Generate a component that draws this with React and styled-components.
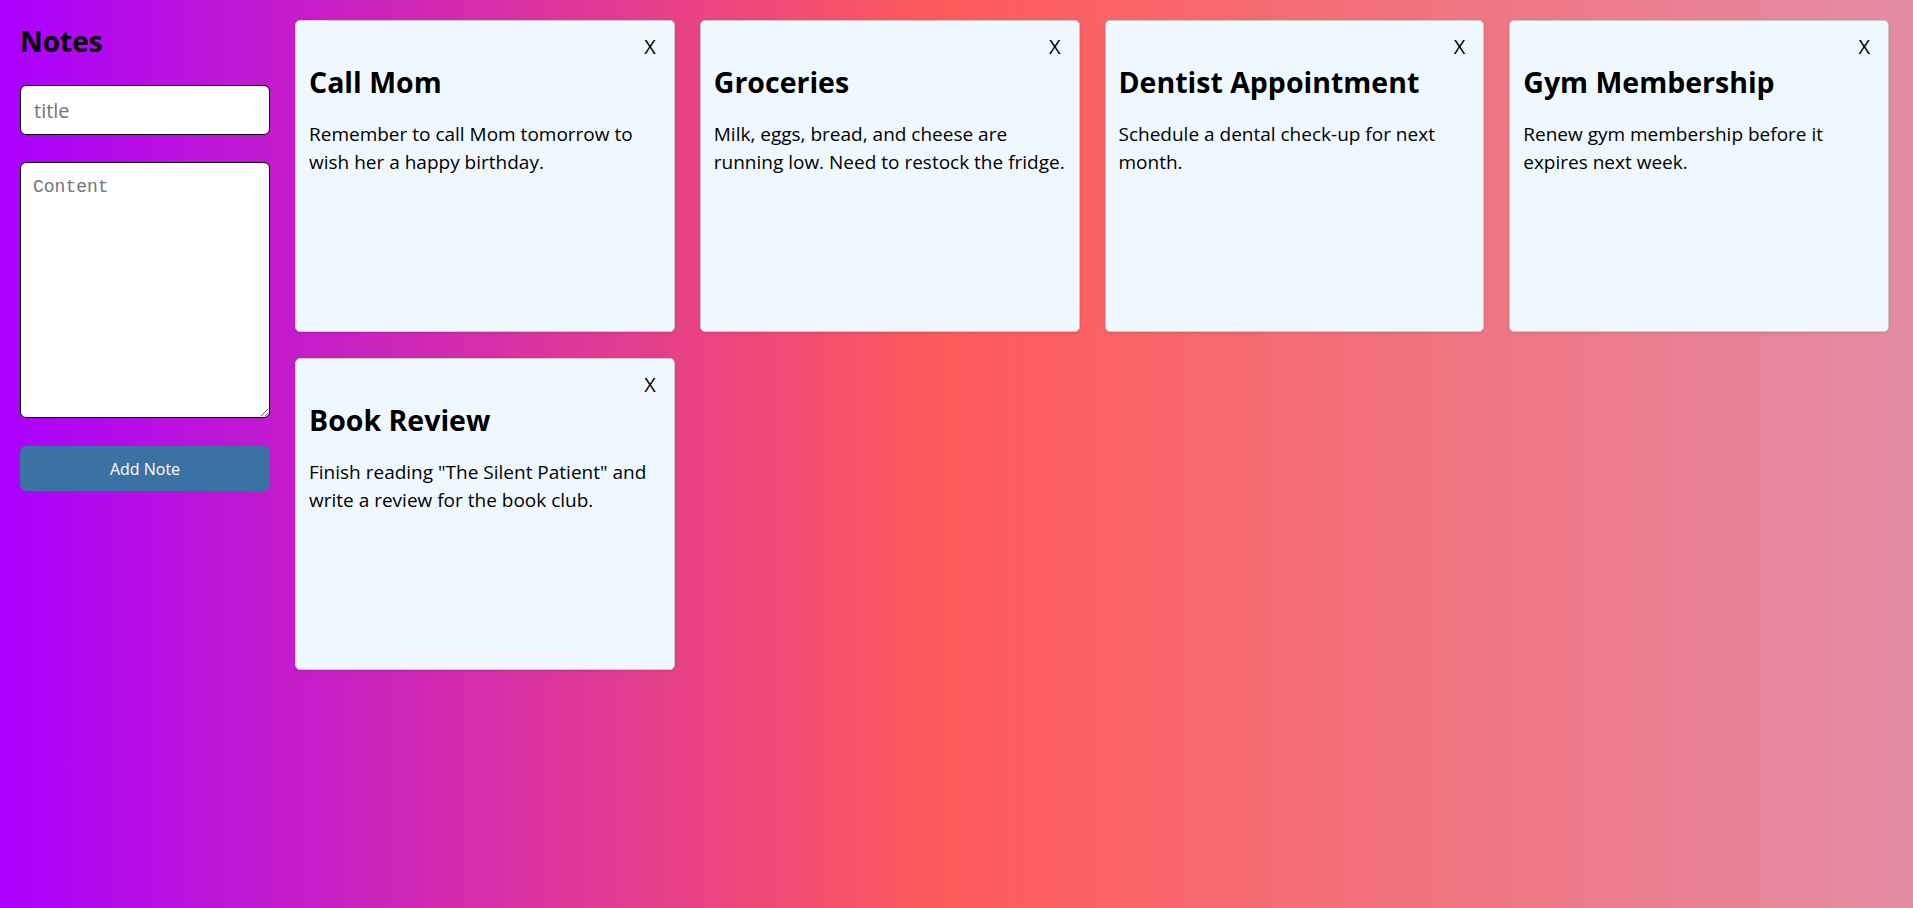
import React from 'react'
import styled, { createGlobalStyle } from 'styled-components'

const GlobalStyle = createGlobalStyle`
  html, body {
    margin: 0;
    padding: 0;
  }
  body {
    min-height: 908px;
    font-family: "Open Sans", "Noto Sans", sans-serif;
    background: linear-gradient(to right, #aa00ff 0%, #ff5a5a 49%, #e48ca4 100%);
    background-attachment: fixed;
  }
`

const notes = [
  { id: 1, title: 'Call Mom', content: 'Remember to call Mom tomorrow to wish her a happy birthday.' },
  { id: 2, title: 'Groceries', content: 'Milk, eggs, bread, and cheese are running low. Need to restock the fridge.' },
  { id: 3, title: 'Dentist Appointment', content: 'Schedule a dental check-up for next month.' },
  { id: 4, title: 'Gym Membership', content: 'Renew gym membership before it expires next week.' },
  { id: 5, title: 'Book Review', content: 'Finish reading "The Silent Patient" and write a review for the book club.' },
]

const Layout = styled.div`
  display: flex;
  align-items: flex-start;
  gap: 25px;
  padding: 20px 24px 20px 20px;
  min-height: 868px;
`

const Sidebar = styled.form`
  width: 250px;
  flex-shrink: 0;
  display: flex;
  flex-direction: column;
`

const Heading = styled.h2`
  margin: 5px 0 28px;
  font-size: 28px;
  font-weight: 700;
  line-height: 32px;
  color: #000;
`

const TitleInput = styled.input`
  box-sizing: border-box;
  width: 100%;
  height: 50px;
  padding: 0 13px;
  border: 1px solid #000;
  border-radius: 6px;
  background: #fff;
  font-family: "Open Sans", sans-serif;
  font-size: 20px;
  &::placeholder { color: #757575; }
`

const ContentArea = styled.textarea`
  box-sizing: border-box;
  width: 100%;
  height: 256px;
  margin-top: 27px;
  padding: 14px 12px;
  border: 1px solid #000;
  border-radius: 6px;
  background: #fff;
  font-family: "Liberation Mono", "DejaVu Sans Mono", monospace;
  font-size: 18px;
  resize: both;
  &::placeholder { color: #757575; }
`

const AddButton = styled.button`
  margin-top: 28px;
  height: 45px;
  width: 100%;
  border: none;
  border-radius: 6px;
  background: #3b72a4;
  color: #fff;
  font-family: "Open Sans", sans-serif;
  font-size: 16px;
  cursor: pointer;
`

const Grid = styled.div`
  flex: 1;
  display: grid;
  grid-template-columns: repeat(4, 1fr);
  column-gap: 25px;
  row-gap: 26px;
`

const Card = styled.div`
  box-sizing: border-box;
  height: 312px;
  padding: 12px 10px 14px 13px;
  background: #f0f8ff;
  border: 1px solid #c9c9c9;
  border-radius: 5px;
  box-shadow: 0 1px 3px rgba(0, 0, 0, 0.12);
  display: flex;
  flex-direction: column;
`

const CardHeader = styled.div`
  display: flex;
  justify-content: flex-end;
  padding-right: 8px;
`

const CloseButton = styled.button`
  border: none;
  background: none;
  padding: 0;
  font-family: "Open Sans", sans-serif;
  font-size: 20px;
  line-height: 28px;
  color: #000;
  cursor: pointer;
`

const CardTitle = styled.h2`
  margin: 2px 0 0;
  font-size: 28.5px;
  line-height: 38px;
  font-weight: 700;
  color: #000;
`

const CardText = styled.p`
  margin: 20px 0 0;
  font-size: 19px;
  line-height: 27.5px;
  color: #000;
`

export default function App() {
  return (
    <>
      <GlobalStyle />
      <Layout>
        <Sidebar onSubmit={e => e.preventDefault()}>
          <Heading>Notes</Heading>
          <TitleInput placeholder="title" />
          <ContentArea placeholder="Content" />
          <AddButton type="submit">Add Note</AddButton>
        </Sidebar>
        <Grid>
          {notes.map(note => (
            <Card key={note.id}>
              <CardHeader>
                <CloseButton>X</CloseButton>
              </CardHeader>
              <CardTitle>{note.title}</CardTitle>
              <CardText>{note.content}</CardText>
            </Card>
          ))}
        </Grid>
      </Layout>
    </>
  )
}
